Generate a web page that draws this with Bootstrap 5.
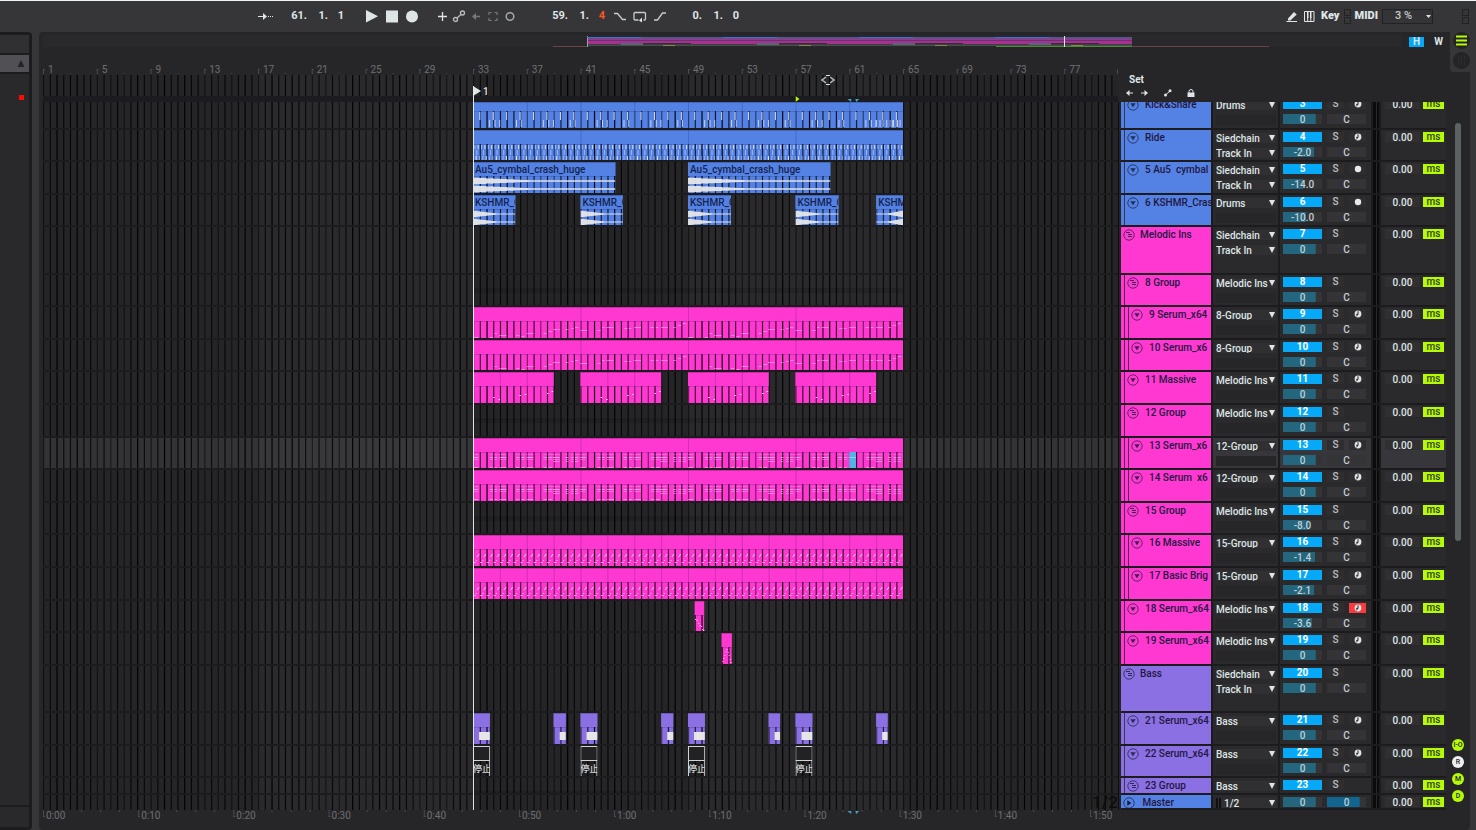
<!DOCTYPE html>
<html lang="en">
<head>
<meta charset="utf-8">
<meta name="viewport" content="width=device-width, initial-scale=1">
<title>Arrangement</title>
<link href="https://cdn.jsdelivr.net/npm/bootstrap@5.3.0/dist/css/bootstrap.min.css" rel="stylesheet">
<style>
:root{--bar:#363638;--panel:#262628;--cell:#2a2a2c;--edge:#1c1c1f;--ink:#dfe5e6;--blue:#5481e4;--pink:#ff38d2;--violet:#8a70e2;--lime:#b5fa06;--cyan:#06a9f8}
body{background:var(--bar);color:var(--ink);font:500 10px/10px Roboto,"Noto Sans CJK JP",sans-serif;border-top:1px solid #eef3f3;overflow:hidden}
button,input,select{font:inherit;color:inherit;border:0;padding:0;margin:0;background:none;border-radius:0;appearance:none;min-width:0}
svg{display:block}
button{display:flex;align-items:center;justify-content:center}
.topbar{height:31px;padding:0 7px 1px 255px;font-size:11px;font-weight:700}
.tbtn{width:20px;height:20px}.tbtn.slim{width:17px}
.tbtn svg{width:16px;height:16px}
.pos span{width:21px;text-align:right}.pos span:last-child{padding-right:5px}
.hot{color:#ff5326}
.g11{margin-left:11px}.g13{margin-left:13px}.g29{margin-left:29px}
.leds i{display:block;width:7px;height:7px;border:1px solid #222224;margin:1px 0}
.cpu{width:51px;height:15px;border:1px solid #222224;padding-left:12px;background:#343436;color:#c4c8c9;font-weight:500}
.pick{position:relative;display:block}
.pick::after{content:"";position:absolute;right:1px;top:50%;margin-top:-3px;width:6px;height:6px;background:var(--ink);clip-path:polygon(0 0,100% 0,50% 100%);pointer-events:none}
.pick.mini::after{width:5px;height:3px;right:2px;margin-top:-1px}
.sidebar{width:32px;flex:none;background:var(--edge);border-radius:0 4px 4px 0;padding:3px 3px 3px 0;margin-right:7px;gap:2px}
.sidebar .a{height:18px;background:#303032}.sidebar .b{height:17px;background:#505055;padding-right:4px}
.sidebar .c{background:#29292b;padding:21px 5px 0 0}.sidebar .d{height:20px;background:#29292b}
.dot{width:5px;height:5px;background:#fb0b05}
.arr{background:var(--panel);border-radius:4px;padding-left:4px;margin-right:6px;position:relative;min-width:0}
.tabs-r{position:absolute;right:0;top:0;width:20px;height:40px;background:var(--bar);border-bottom-left-radius:3px;padding-left:3px;gap:3px}
.tabs-r button{width:17px;height:17px;border-radius:50%;background:#242426;flex:none}
.over{height:26px;padding:3px 20px 0 0;gap:7px}
.over>svg{height:12px;background:#29292b}
.hw{width:15px;height:10px;margin-top:2px;font-weight:700}
.hw.on{background:var(--cyan)}
.rail{width:24px;flex:none;position:relative}
.thumb{width:6px;height:418px;border-radius:3px;background:#5c6163;margin:65px 0 0 9px}
.rnds{padding-bottom:23px}
.rnd{width:12px;height:12px;border-radius:50%;background:var(--lime);color:#222;font-size:7px;margin:0 0 5px 6px}
.rnd.w{background:#eef0f0}
.lane{flex:1 1 0;min-width:0;border-right:1px solid #0d0d0e;margin-right:2px}
.lane.plain{border-color:transparent}
.head{width:325px;flex:none}
.lane>svg{width:100%}
.sethead{padding:17px 0 0 5px}
.sethead b{padding:0 3px}
.sethead button{width:15px;height:12px}
.trk{display:grid;grid-template-columns:90px 65px 91px 6px 65px;column-gap:2px;overflow:hidden;background:var(--edge)}
.cell{background:var(--cell);margin-bottom:2px;overflow:hidden;min-width:0}
.sel .cell{background:#37373b}
.peek{margin-top:-5px}
.nm{color:#22183f;white-space:pre}
.ind{width:4px;flex:none;border-right:1px solid #1a1a20b0}
.nm .lab{padding:1px 0 0 2px;gap:6px;height:14px}
.nm .lab span{padding-top:1px}
.nm.d0 .lab{gap:5px}
.nm svg{width:12px;height:12px;flex:none}
.route{padding:3px 0 0 3px}
.route .pick{width:60px;height:10px;margin-bottom:5px;background:#303032}
.route .pick.none{background:#262628}.route .pick.none::after{display:none}
.route select{width:60px;height:10px;padding-top:1px;display:block;line-height:10px}
.bus select{padding-left:8px;background:linear-gradient(90deg,#101011 2px,transparent 2px,transparent 3px,#101011 3px,#101011 5px,transparent 5px)}
.mix{display:grid;grid-template-columns:39px 17px 17px;grid-auto-rows:10px;gap:5px;padding:2px 0 0 3px}
.act{background:var(--cyan);color:#fff;font-weight:700}
.vol,.pan{text-align:center;width:39px;height:10px;background:linear-gradient(#24667d,#24667d) 0/var(--f) 100% no-repeat #343437;color:#c5d0d3}
.pan{grid-column:2/4;background:#343437}
.pan.cue{background:linear-gradient(#11658f,#11658f) 0/84% 100% no-repeat #343437}
.so{background:#2e2e30;color:#bcc0c1}
.so.armed{background:#fb3a3e}
.meter{background:linear-gradient(90deg,#0b0b0c 3px,#29292b 3px,#29292b 4px,#0b0b0c 4px);margin-bottom:2px}
.dly{display:flex;gap:3px;padding:2px 0 0 4px}
.dly input{width:35px;height:10px;text-align:center;background:#303032}
.ms{width:21px;height:10px;background:var(--lime);color:#33401a}
svg text{font:500 10px Roboto,"Noto Sans CJK JP",sans-serif}
svg .num{fill:#6f6f72;font-weight:400}
svg .stopt{font-size:9px}
svg .ghost{font-size:17px}
</style>
</head>
<body class="d-flex flex-column min-vh-100">
<svg width="0" height="0" class="position-absolute" aria-hidden="true">
 <symbol id="i-trk" viewBox="0 0 12 12"><circle cx="6" cy="6" r="5.2" fill="none" stroke="#111a30" stroke-opacity=".65"/><path d="M3.300 4.300h5.400L6 8.300z" fill="#111a30" fill-opacity=".8"/></symbol>
 <symbol id="i-grp" viewBox="0 0 12 12"><circle cx="6" cy="6" r="5.2" fill="none" stroke="#111a30" stroke-opacity=".65"/><path d="M3 3.500h4M5 5.500h4M5 7.500h4" stroke="#111a30" stroke-opacity=".8" fill="none"/></symbol>
 <symbol id="i-mas" viewBox="0 0 12 12"><circle cx="6" cy="6" r="5.2" fill="none" stroke="#111a30" stroke-opacity=".65"/><path d="M4.300 3.300v5.400l4-2.700z" fill="#111a30"/></symbol>
 <symbol id="i-midi" viewBox="0 0 8 8"><circle cx="4" cy="4" r="3.4" fill="#dfe5e6"/><path d="M4 1.200v3.200H2.200M2.200 6.200l2-1.800" stroke="#2a2a2c" fill="none"/></symbol>
 <symbol id="i-aud" viewBox="0 0 8 8"><circle cx="4" cy="4" r="3.2" fill="#e6eaea"/></symbol>
</svg>

<header class="topbar d-flex align-items-center">
 <button class="tbtn" aria-label="Follow"><svg viewBox="0 0 16 16"><path d="M1 8.500h7M11 8.500h1M13 8.500h1M15 8.500h1" stroke="#dfe5e6"/><path d="M6 5 10 8.500l-4 3.500z" fill="#dfe5e6"/></svg></button>
 <div class="pos d-flex g11"><span>61.</span><span>1.</span><span>1</span></div>
 <button class="tbtn g13" aria-label="Play"><svg viewBox="0 0 16 16"><path d="M2 2l12 6.200L2 14.500z" fill="#dfe5e6"/></svg></button>
 <button class="tbtn" aria-label="Stop"><svg viewBox="0 0 16 16"><path d="M2 2.500h12v12H2z" fill="#dfe5e6"/></svg></button>
 <button class="tbtn" aria-label="Record"><svg viewBox="0 0 16 16"><circle cx="8" cy="8.500" r="6" fill="#dfe5e6"/></svg></button>
 <button class="tbtn slim g11" aria-label="Overdub"><svg viewBox="0 0 16 16"><path d="M8.500 4v9M4 8.500h9" stroke="#dfe5e6" stroke-width="1.300"/></svg></button>
 <button class="tbtn slim" aria-label="Automation arm"><svg viewBox="0 0 16 16"><g fill="none" stroke="#b9bdbe" stroke-width="1.300"><circle cx="4.500" cy="11.500" r="2"/><circle cx="11.500" cy="5" r="2"/><path d="M6 10l4-3.600"/></g></svg></button>
 <button class="tbtn slim" aria-label="Re-enable automation"><svg viewBox="0 0 16 16"><path d="M5 8.500h7" stroke="#77787a" stroke-width="1.500"/><path d="M8 5 4 8.500 8 12z" fill="#77787a"/></svg></button>
 <button class="tbtn slim" aria-label="Capture"><svg viewBox="0 0 16 16"><path d="M4 7V4.500h2.500M9.500 4.500H12V7M12 10v2.500H9.500M6.500 12.500H4V10" fill="none" stroke="#77787a" stroke-width="1.200"/></svg></button>
 <button class="tbtn slim" aria-label="Session record"><svg viewBox="0 0 16 16"><circle cx="8" cy="8.500" r="3.800" fill="none" stroke="#a5a9aa" stroke-width="1.500"/></svg></button>
 <div class="pos d-flex g29"><span>59.</span><span>1.</span><span class="hot">4</span></div>
 <button class="tbtn" aria-label="Punch in"><svg viewBox="0 0 16 16"><path d="M2 5.500h3.500l5 6H14" fill="none" stroke="#c8cccd" stroke-width="1.300"/></svg></button>
 <button class="tbtn" aria-label="Loop"><svg viewBox="0 0 16 16"><path d="M6.500 12H3a1 1 0 0 1-1-1V5.500a1 1 0 0 1 1-1h9.500a1 1 0 0 1 1 1V11a1 1 0 0 1-1 1h-1" fill="none" stroke="#c8cccd" stroke-width="1.300"/><path d="M7 12.500l3-3v5z" fill="#dfe5e6"/></svg></button>
 <button class="tbtn" aria-label="Punch out"><svg viewBox="0 0 16 16"><path d="M2 12h3.500l5-7H14" fill="none" stroke="#c8cccd" stroke-width="1.300"/></svg></button>
 <div class="pos d-flex g11"><span>0.</span><span>1.</span><span>0</span></div>
 <div class="ms-auto d-flex align-items-center">
  <button class="slim tbtn" aria-label="Draw mode"><svg viewBox="0 0 16 16"><path d="M4 10.500 10 4l2.700 2.400-6.300 6.100H4z" fill="#dfe5e6"/><path d="M2.500 13.500H13" stroke="#dfe5e6"/></svg></button>
  <button class="slim tbtn" aria-label="Computer MIDI keyboard"><svg viewBox="0 0 16 16"><path d="M3.500 3.500h9.500v10H3.500zM6.700 9v4.500M9.800 9v4.500" fill="none" stroke="#dfe5e6"/><path d="M6 3.500h1.500V10H6zM9 3.500h1.500V10H9z" fill="#dfe5e6"/></svg></button>
  <b class="ms-1 fs-key">Key</b>
  <div class="leds ms-1"><i></i><i></i></div>
  <b class="ms-1">MIDI</b>
  <span class="pick mini ms-1"><select class="cpu" aria-label="CPU load"><option>3 %</option></select></span>
  <div class="leds g29"><i></i><i></i></div>
 </div>
</header>

<main class="d-flex flex-grow-1">
 <aside class="sidebar d-flex flex-column">
  <div class="a"></div>
  <div class="b d-flex align-items-center justify-content-end"><svg width="8" height="7"><path d="M4 0l3.500 7H.500z" fill="#242426"/></svg></div>
  <div class="c flex-grow-1 d-flex justify-content-end"><i class="dot"></i></div>
  <div class="d"></div>
 </aside>
 <section class="arr flex-grow-1 d-flex flex-column">
  <div class="tabs-r d-flex flex-column">
   <button aria-label="Arrangement view"><svg width="11" height="11"><path d="M0 1.500h11M0 5.500h11M0 9.500h11" stroke="#b5fa06" stroke-width="2"/></svg></button>
   <button aria-label="Session view"><svg width="11" height="11"><path d="M2.500 1v9M5.500 1v9M8.500 1v9" stroke="#2b2b2e"/></svg></button>
  </div>
  <div class="over d-flex">
   <svg id="overview" class="flex-grow-1" viewBox="0 0 1359 12" preserveAspectRatio="none" aria-label="Overview"></svg>
   <button class="hw on">H</button><button class="hw me-1">W</button>
  </div>
  <div class="d-flex">
   <div class="flex-grow-1">
    <div class="d-flex">
     <div class="lane plain" id="ruler"></div>
     <div class="head sethead">
      <b class="d-block">Set</b>
      <div class="d-flex">
       <button aria-label="Previous locator" class="pt-1"><svg class="me-2" width="7" height="6"><path d="M2 3h5" stroke="#dfe5e6"/><path d="M3.500 0v6L0 3z" fill="#dfe5e6"/></svg></button>
       <button aria-label="Next locator" class="pt-1"><svg class="me-2" width="7" height="6"><path d="M0 3h5" stroke="#dfe5e6"/><path d="M3.500 0v6L7 3z" fill="#dfe5e6"/></svg></button>
       <button aria-label="Automation mode" class="ms-1 pt-1"><svg width="8" height="8"><circle cx="1.500" cy="6" r="1.500" fill="#dfe5e6"/><circle cx="6" cy="1.800" r="1.500" fill="#dfe5e6"/><path d="M1.500 6 6 2" stroke="#dfe5e6"/></svg></button>
       <button aria-label="Lock envelopes" class="ms-2 pt-1"><svg width="8" height="8"><path d="M2 4V2.500a2 2 0 0 1 4 0V4" fill="none" stroke="#dfe5e6"/><path d="M.500 3.500h7V8h-7z" fill="#dfe5e6"/></svg></button>
      </div>
     </div>
    </div>
    <div id="tracks"></div>
    <div class="d-flex"><div class="lane plain" id="clock"></div><div class="head"></div></div>
   </div>
   <div class="rail d-flex flex-column">
    <div class="thumb"></div>
    <div class="mt-auto rnds">
     <button class="rnd" aria-label="Show I/O">I-O</button>
     <button class="rnd w" aria-label="Show returns">R</button>
     <button class="rnd" aria-label="Show mixer">M</button>
     <button class="rnd mb-0" aria-label="Show delays">D</button>
    </div>
   </div>
  </div>
 </section>
</main>

<script>
const BARS = 80, BLUE = '#5481e4', PINK = '#ff38d2', VIOLET = '#8a70e2';
const pc = b => ((b - 1) / BARS * 100).toFixed(4) + '%';
const wd = b => (b / BARS * 100).toFixed(4) + '%';
const rect = (b, y, w, h, fill, o = 1) => `<rect x="${pc(b)}" y="${y}" width="${wd(w)}" height="${h}" fill="${fill}" opacity="${o}"/>`;
const every = (from, to, step, fn) => { let s = ''; for (let b = from; b < to - 1e-6; b += step) s += fn(b); return s; };

const ground = (h, hot) => [0, 1, 2, 3, 4].map(i => rect(1 + i * 16, 0, 16, h, hot ? (i % 2 ? '#38383b' : '#333336') : (i % 2 ? '#2a2a2c' : '#252527'))).join('');
/* Half-bar grid: strength follows a cycle so that the lines do not all weigh the same */
const weight = [.55, .75, .95, .75, .8, .95, .8, .75, .5, .75, .5, .8, .5, .75, .95, .75];
const grid = (h, y = 0) => every(1, 81, .5, b => `<rect x="${pc(b)}" y="${y}" width="1.2" height="${h - y}" fill="#000" opacity="${weight[(b - 1) * 2 % 16]}"/>`);

/* Rhythm shared by the lead and chord parts: start, length (bars), pitch row */
const lead = [[0,.4,30],[1.25,.25,30],[1.6,.2,26],[1.95,.55,28],[3.2,.25,28],[3.6,.25,29],[4,.5,26],[5.25,.25,26],[5.6,.3,24],[5.95,.5,22],[6.9,.2,22],[7.3,.2,21],[7.6,.25,20],
 [8,.5,23],[9.25,.25,23],[9.6,.2,20],[9.95,.5,20],[11.25,.25,21],[11.6,.2,21],[12,.5,20],[13.2,.25,20],[13.6,.2,20],[14,.5,20],[14.9,.2,20],[15.25,.25,18],[15.6,.25,16]];
const tick = (b, y, h, o) => `<rect x="${pc(b)}" y="${y}" width="1" height="${h}" fill="#fff" opacity="${o}"/>`;
const notes = {
 kick: (a, z) => every(a, z, 1, b => tick(b + .47, 10, 8, .8)) + every(a, z, 4, b => [1.2, 1.6, 1.95, 3.2, 3.55].map(o => tick(b + o, 18, 7, .65)).join('')) + every(63, 65, .25, b => tick(b, 18, 7, .6)),
 hats: (a, z) => every(a, z, .25, b => tick(b + .1, 15, 4, (b * 4) % 2 ? .75 : .45)) + every(a, z, .5, b => tick(b + .25, 20, 5, .45)) + every(a, z, .25, b => tick(b + .2, 26, 4, (b * 4) % 3 ? .4 : .8)),
 lead: (a, z) => every(a, z, 16, b => lead.map(n => rect(b + n[0], n[2], n[1], 1, '#ffd0f2', .5)).join('')),
 chord: (a, z) => every(a, z, 8, b => lead.slice(0, 13).map((n, i) => [[16, .25], [19, .6], [21, .35], [i > 8 ? 23 : 29, .45]].map(v => rect(b + n[0], v[0], n[1], 1, '#ffe0f6', v[1])).join('')).join('')),
 arp: (a, z) => every(a, z, .5, b => [[.02, 27], [.12, 27], [.2, 25], [.28, 21], [.34, 20], [.38, 19]].map(n => rect(b + n[0], n[1], .09, 1, '#ffe4f8', .7)).join('')),
 sparse: a => [[1.5,25],[1.9,27],[3.45,23],[3.85,22],[5.5,21],[5.85,19]].map(n => rect(a + n[0], n[1], .12, 1, '#fff', .8)).join(''),
 fall: a => [[.02,18],[.15,19],[.25,22],[.35,24],[.45,25],[.55,28],[.62,29]].map(n => rect(a + n[0], n[1], .1, 1, '#fff', .7)).join(''),
 peak: a => [[.05,28],[.12,25],[.2,22],[.28,18],[.36,16],[.45,19],[.52,22],[.6,26],[.66,29]].map(n => rect(a + n[0], n[1], .09, 1, '#fff', .6)).join(''),
 block: (a, z) => rect(a + .45, 19, z - a - .45, 8, '#e6e6e8')
};

/* Decaying stereo waveform, drawn in a stretchable box */
const wave = (a, z, kind) => {
 let p = '';
 for (const c of [4, 12]) {
  let up = '', dn = '';
  for (let i = 0; i <= 60; i++) {
   const t = kind === 'rise' ? 1 - i / 60 : i / 60;
   const r = kind === 'long' ? Math.max(3.2 * (1 - t * 2) + (i % 3) * .15, .7) : Math.max(3.2 * (1 - t * 1.5) + (i % 2) * .2, .5);
   up += `L${i} ${(c - r).toFixed(2)}`; dn = `L${i} ${(c + r).toFixed(2)}` + dn;
  }
  p += 'M' + up.slice(1) + dn + 'Z';
 }
 return `<svg x="${pc(a)}" y="15" width="${wd(z - a)}" height="16" viewBox="0 0 60 16" preserveAspectRatio="none"><path d="${p}" fill="#e6e6e8" opacity=".95"/></svg>`;
};

const full = [[33, 65]];
const T = [
 { h: 28, name: 'Kick&amp;Snare', n: 3, d: 1, c: BLUE, out: ['Drums'], v: '0', rec: 'midi', clips: full, cut: 4, part: 'kick', th: 9, peek: 1 },
 { h: 32, name: 'Ride', n: 4, d: 1, c: BLUE, out: ['Siedchain', 'Track In'], v: '-2.0', rec: 'midi', clips: full, cut: 8, part: 'hats' },
 { h: 33, name: '5 Au5  cymbal', n: 5, d: 1, c: BLUE, out: ['Siedchain', 'Track In'], v: '-14.0', rec: 'aud', clips: [[33, 43.6], [49, 59.6]], label: 'Au5_cymbal_crash_huge', wave: 'long' },
 { h: 32, name: '6 KSHMR_Cras', n: 6, d: 1, c: BLUE, out: ['Drums'], v: '-10.0', rec: 'aud', clips: [[33, 36.15], [41, 44.15], [49, 52.2], [57, 60.2], [63, 65]], label: 'KSHMR_C', wave: 'short' },
 { h: 48, name: 'Melodic Ins', n: 7, d: 0, c: PINK, out: ['Siedchain', 'Track In'], v: '0', group: 1 },
 { h: 32, name: '8 Group', n: 8, d: 1, c: PINK, out: ['Melodic Ins'], v: '0', group: 1 },
 { h: 33, name: '9 Serum_x64', n: 9, d: 2, c: PINK, out: ['8-Group'], v: '0', rec: 'midi', clips: full, cut: 8, part: 'lead' },
 { h: 32, name: '10 Serum_x6', n: 10, d: 2, c: PINK, out: ['8-Group'], v: '0', rec: 'midi', clips: full, cut: 8, part: 'lead' },
 { h: 33, name: '11 Massive', n: 11, d: 1, c: PINK, out: ['Melodic Ins'], v: '0', rec: 'midi', clips: [[33, 39], [41, 47], [49, 55], [57, 63]], cut: 2, part: 'sparse' },
 { h: 33, name: '12 Group', n: 12, d: 1, c: PINK, out: ['Melodic Ins'], v: '0', group: 1 },
 { h: 32, name: '13 Serum_x6', n: 13, d: 2, c: PINK, out: ['12-Group'], v: '0', rec: 'midi', clips: full, cut: 8, part: 'chord', sel: 1 },
 { h: 33, name: '14 Serum  x6', n: 14, d: 2, c: PINK, out: ['12-Group'], v: '0', rec: 'midi', clips: full, cut: 8, part: 'chord' },
 { h: 32, name: '15 Group', n: 15, d: 1, c: PINK, out: ['Melodic Ins'], v: '-8.0', group: 1 },
 { h: 33, name: '16 Massive', n: 16, d: 2, c: PINK, out: ['15-Group'], v: '-1.4', rec: 'midi', clips: full, cut: 2, part: 'arp' },
 { h: 33, name: '17 Basic Brig', n: 17, d: 2, c: PINK, out: ['15-Group'], v: '-2.1', rec: 'midi', clips: full, cut: 2, part: 'arp' },
 { h: 32, name: '18 Serum_x64', n: 18, d: 1, c: PINK, out: ['Melodic Ins'], v: '-3.6', rec: 'midi', armed: 1, clips: [[49.5, 50.2]], part: 'fall' },
 { h: 33, name: '19 Serum_x64', n: 19, d: 1, c: PINK, out: ['Melodic Ins'], v: '0', rec: 'midi', clips: [[51.5, 52.25]], part: 'peak' },
 { h: 47, name: 'Bass', n: 20, d: 0, c: VIOLET, out: ['Siedchain', 'Track In'], v: '0', group: 1 },
 { h: 33, name: '21 Serum_x64', n: 21, d: 1, c: VIOLET, out: ['Bass'], v: '0', rec: 'midi', clips: [[33, 34.25], [39, 39.9], [41, 42.25], [47, 47.9], [49, 50.25], [55, 55.85], [57, 58.25], [63, 63.85]], part: 'block' },
 { h: 32, name: '22 Serum_x64', n: 22, d: 1, c: VIOLET, out: ['Bass'], v: '0', rec: 'midi', clips: [[33, 34.25], [41, 42.25], [49, 50.25], [57, 58.25]], stop: 1 },
 { h: 17, name: '23 Group', n: 23, d: 1, c: VIOLET, out: ['Bass'], v: '0', group: 1 },
 { h: 15, name: ' Master', d: 0, c: BLUE, out: ['1/2'], v: '0', master: 1 }
];
const fill = { '0': 84, '-2.0': 80, '-14.0': 52, '-10.0': 59, '-8.0': 67, '-1.4': 82, '-2.1': 80, '-3.6': 75 };

function lane(t) {
 const h = t.h, ch = h - (t.h > 16 ? 2 : 0), th = t.th || 14;
 let s = ground(h, t.sel);
 const clips = t.clips || [];
 if (t.group && h < 40) s += rect(33, 13, 32, 5, '#000', .12);
 clips.forEach(([a, z]) => s += rect(a, 0, z - a, ch, t.stop ? '#202022' : t.c));
 s += grid(h);
 clips.forEach(([a, z], i) => {
  if (t.stop) {
   s += `<svg x="${pc(a)}" width="${wd(z - a)}" height="${ch}"><rect x=".5" y=".5" width="16" height="${ch + 4}" fill="none" stroke="#cfd3d4"/><path d="M0 14.500h17" stroke="#cfd3d4"/><rect x="1" y="1" width="15" height="13" fill="#222224"/><text class="stopt" x="0" y="26" fill="#d5d9da">停止</text></svg>`;
   return;
  }
  s += rect(a, 0, z - a, th, t.c) + rect(a, 0, z - a, 1, '#000', .2) + rect(a, th, z - a, 1, '#101840', .18);
  if (t.cut) s += every(a + t.cut, z, t.cut, b => `<rect x="${pc(b)}" width="1" height="${th}" fill="#101840" opacity=".2"/>`);
  if (t.label) s += `<svg x="${pc(a)}" width="${wd(z - a)}" height="${ch}"><text x="2" y="11" fill="#15244d">${t.label}</text></svg>`;
  if (t.wave) s += wave(a, z, t.wave === 'short' && i === 4 ? 'rise' : t.wave);
  if (t.part) s += notes[t.part](a, z);
 });
 if (t.sel) s += rect(61, 14, .5, 17, '#4fb4e6') + rect(61, 19, .5, 1, '#8ad0f2') + rect(61, 0, .5, 1, '#9a70d8');
 if (h > 16) s += `<rect y="${h - 2}" width="100%" height="2" fill="#1c1c1f"/>`;
 if (t.master) s += `<text class="ghost" x="100%" y="13" text-anchor="end" fill="#0e0e0f">1/2</text>`;
 s += `<rect x="${pc(33)}" width="1" height="${h}" fill="#dfe6e6"/>`;
 return `<svg height="${h}" aria-label="${t.name.trim()} lane">${s}</svg>`;
}
function head(t) {
 const id = t.n || 'Master', icon = t.master ? 'mas' : t.group ? 'grp' : 'trk';
 const sel = o => `<span class="pick${t.master ? ' bus' : ''}"><select aria-label="Output of ${id}"><option>${o}</option></select></span>`;
 const tall = t.h > 20;
 return `<div class="head trk${t.sel ? ' sel' : ''}" style="height:${t.h}px">
 <div class="cell nm d${t.d} d-flex" style="background:${t.c}">${'<i class="ind"></i>'.repeat(t.d)}<div class="lab d-flex align-items-center${t.peek ? ' peek' : ''}"><svg aria-hidden="true"><use href="#i-${icon}"/></svg><span>${t.name}</span></div></div>
 <div class="cell"><div class="route${t.peek ? ' peek' : ''}">${t.out.map(sel).join('')}${tall && t.out.length < 2 ? '<span class="pick none"></span>' : ''}</div></div>
 <div class="cell"><div class="mix${t.peek ? ' peek' : ''}">${t.master ? '' : `<button class="act">${t.n}</button><button class="so" aria-label="Solo ${id}">S</button>${t.rec ? `<button class="so${t.armed ? ' armed' : ''}" aria-label="Arm ${id}"><svg width="8" height="8"><use href="#i-${t.rec}"/></svg></button>` : '<span></span>'}`}${tall || t.master ? `<input class="vol" aria-label="Volume ${id}" value="${t.v}" style="--f:${fill[t.v]}%"><input class="pan${t.master ? ' cue' : ''}" aria-label="Pan ${id}" value="${t.master ? 0 : 'C'}">` : ''}</div></div>
 <div class="meter"></div>
 <div class="cell"><div class="dly${t.peek ? ' peek' : ''}"><input aria-label="Delay ${id}" value="0.00"><button class="ms">ms</button></div></div></div>`;
}
document.getElementById('tracks').innerHTML = T.map(t => `<div class="d-flex"><div class="lane">${lane(t)}</div>${head(t)}</div>`).join('');

/* Bar ruler, scrub strip and locator band */
let r = '';
for (let b = 1; b < 81; b += 4) {
 r += `<rect x="${pc(b)}" y="11" width="1" height="5" fill="#4b4b4e"/><rect x="${pc(b)}" y="11" width="2" height="1" fill="#4b4b4e"/><rect x="${pc(b + 2)}" y="15" width="1" height="1" fill="#4b4b4e"/>`;
 r += `<text class="num" x="${pc(b)}" dx="5" y="15">${b}</text>`;
}
r += `<rect x="100%" y="11" width="1" height="5" transform="translate(-1)" fill="#4b4b4e"/>`;
r += `<svg y="17" height="21" width="100%">${ground(21)}${grid(21)}</svg><rect y="38" width="100%" height="6" fill="#1c1c20"/>`;
r += `<svg x="${pc(33)}" y="28" width="24" height="16"><path d="M0 0l8 5-8 5z" fill="#dfe6e6"/><rect width="1" height="16" fill="#dfe6e6"/><text x="10" y="9" fill="#dfe6e6">1</text></svg>`;
r += `<svg x="${pc(57)}" y="38" width="4" height="6"><path d="M0 0l4 3-4 3z" fill="#b5fa06"/></svg>`;
const ends = y => `<svg x="${pc(61)}" y="${y}" width="12" height="3" overflow="visible"><path d="M-2 0h4v3zM6 0h4l-3 3z" fill="#3f9fc8"/></svg>`;
r += ends(41);
r += `<svg x="${pc(58.9)}" y="16" width="14" height="12"><path d="M5 3 1 6l4 3M9 3l4 3-4 3" fill="none" stroke="#b5b9ba" stroke-width="1.500"/><path d="M5 1.500h4M5 10.500h4" stroke="#e0e4e5"/></svg>`;
document.getElementById('ruler').innerHTML = `<svg height="44">${r}</svg>`;

/* Clock ruler at 170 bpm */
const perTen = 170 / 4 / 6;
let c = '';
for (let i = 0; i < 12; i++) {
 const b = 1 + i * perTen;
 c += `<rect x="${pc(b)}" width="1" height="7" fill="#4b4b4e"/><rect x="${pc(b)}" y="6" width="2" height="1" fill="#4b4b4e"/><text class="num" x="${pc(b)}" dx="3" y="9">${Math.floor(i / 6)}:${i % 6}0</text>`;
 for (let k = 1; k < 5; k++) if (b + k * perTen / 5 < 81) c += `<rect x="${pc(b + k * perTen / 5)}" width="1" height="2" fill="#4b4b4e"/>`;
}
document.getElementById('clock').innerHTML = `<svg height="15">${c}${ends(1)}</svg>`;

/* Whole-set overview */
const R = (x, y, w, h, f, o = 1) => `<rect x="${x}" y="${y}" width="${w}" height="${h}" fill="${f}" opacity="${o}"/>`;
let o = R(510, 11, 35, 1, '#6a4347') + R(1089, 11, 137, 1, '#6a4347') + R(544, 2, 545, 2, '#4f5a8c') + R(544, 4, 545, 5, '#a8308f') + R(544, 5, 545, 1, '#6d2f72') + R(544, 9, 545, 1, '#3e3a5e') + R(544, 10, 545, 1, '#44552f') + R(953, 11, 136, 2, '#4d8a3a') + R(544, 1, 1, 11, '#9aa0a2');
for (let i = 0; i < 4; i++) o += R(578 + i * 136, 8, 22, 2, '#5d6186') + R(620 + i * 136, 10, 12, 1, '#8a8a2c') + R(600 + i * 136, 8, 48, 1, '#3a2a40') + R(544 + i * 136, 2, 54, 1, '#4670cc');
o += R(1021, 1, 1, 11, '#e0e6e6');
document.getElementById('overview').innerHTML = o;
</script>
<script src="https://cdn.jsdelivr.net/npm/bootstrap@5.3.0/dist/js/bootstrap.bundle.min.js"></script>
</body>
</html>
